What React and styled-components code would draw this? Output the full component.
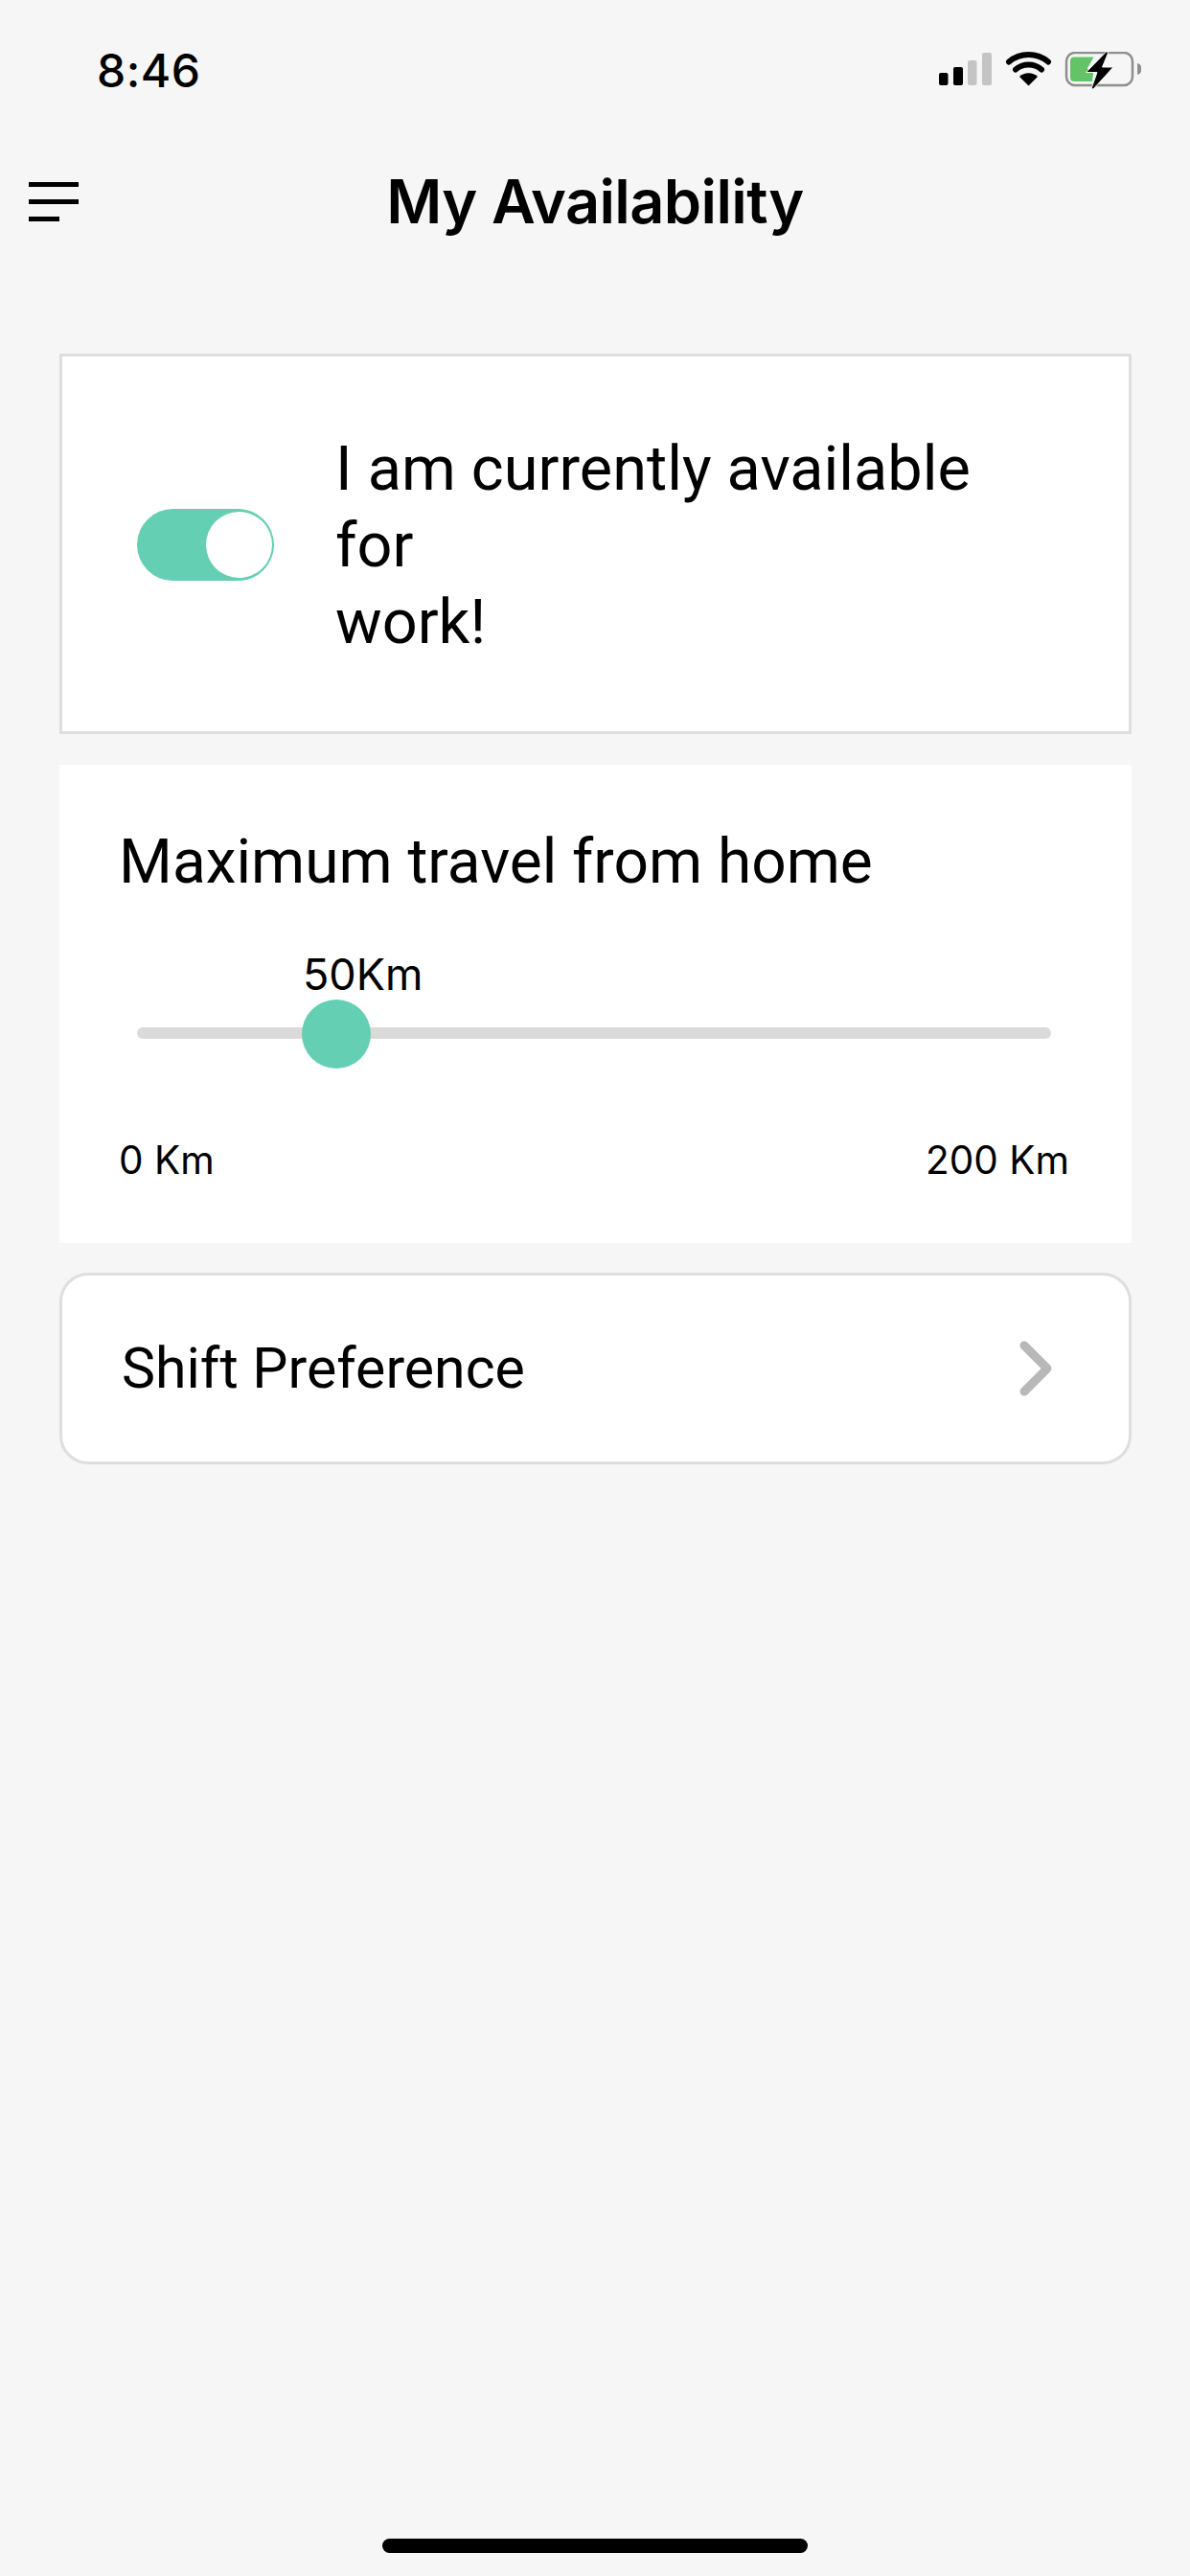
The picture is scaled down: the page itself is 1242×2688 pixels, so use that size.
import React from "react";
import styled, { createGlobalStyle } from "styled-components";

const Global = createGlobalStyle`
  html, body { margin: 0; padding: 0; background: #f6f6f6; }
  * { box-sizing: border-box; }
`;

const Page = styled.div`
  width: 1242px;
  height: 2688px;
  background: #f6f6f6;
  color: #000;
  font-family: "Roboto", "Liberation Sans", sans-serif;
  display: flex;
  flex-direction: column;
  overflow: hidden;
`;

const StatusBar = styled.div`
  height: 150px;
  padding: 48px 51px 0 101px;
  display: flex;
  justify-content: space-between;
  align-items: flex-start;
`;

const Time = styled.div`
  font-family: "Inter", sans-serif;
  font-size: 48px;
  font-weight: 500;
  line-height: 52px;
  letter-spacing: 0.5px;
`;

const StatusIcons = styled.svg`
  display: block;
  width: 211px;
  height: 40px;
  margin-top: 6px;
`;

const Header = styled.header`
  height: 120px;
  padding-left: 30px;
  display: flex;
  align-items: center;
  position: relative;
`;

const Title = styled.h1`
  flex: 1;
  margin: 0 82px 0 0;
  text-align: center;
  font-family: "Inter", sans-serif;
  font-size: 63px;
  font-weight: 600;
  line-height: 80px;
  letter-spacing: -0.6px;
`;

const Menu = styled.div`
  width: 52px;
  display: flex;
  flex-direction: column;
  gap: 13px;
`;

const MenuLine = styled.span`
  display: block;
  height: 5px;
  width: ${(p) => p.$w}px;
  background: #000;
`;

const Content = styled.main`
  margin-top: 99px;
  padding: 0 61px 0 62px;
  display: flex;
  flex-direction: column;
`;

const ToggleCard = styled.section`
  height: 397px;
  background: #fff;
  border: 3px solid #dedede;
  padding: 2px 60px 0 78px;
  display: flex;
  align-items: center;
  gap: 64px;
`;

const Toggle = styled.div`
  flex: none;
  width: 143px;
  height: 75px;
  border-radius: 38px;
  background: #65cfb3;
  padding: 3px 2px;
  display: flex;
  justify-content: flex-end;
`;

const Knob = styled.span`
  display: block;
  width: 69px;
  height: 69px;
  border-radius: 50%;
  background: #fff;
`;

const ToggleText = styled.p`
  margin: 0;
  width: 700px;
  font-size: 64.8px;
  line-height: 80px;
  font-weight: 400;
`;

const TravelCard = styled.section`
  height: 499px;
  margin-top: 32px;
  background: #fff;
  padding: 62px 65px 0 62px;
`;

const CardTitle = styled.h2`
  margin: 0;
  font-size: 64px;
  line-height: 80px;
  font-weight: 400;
`;

const SliderWrap = styled.div`
  position: relative;
  margin: 44px 19px 0 19px;
  height: 166px;
`;

const ValueLabel = styled.div`
  position: absolute;
  left: 173px;
  top: 6px;
  font-family: "Inter", sans-serif;
  font-size: 45px;
  line-height: 54px;
`;

const Track = styled.div`
  position: absolute;
  left: 0;
  right: 0;
  top: 88px;
  height: 12px;
  border-radius: 6px;
  background: #dadada;
`;

const Thumb = styled.div`
  position: absolute;
  left: 172px;
  top: 59px;
  width: 72px;
  height: 72px;
  border-radius: 50%;
  background: #65cfb3;
`;

const Range = styled.div`
  margin-top: 37px;
  display: flex;
  justify-content: space-between;
  font-family: "Inter", sans-serif;
  font-size: 40.5px;
  line-height: 48px;
`;

const ShiftRow = styled.section`
  height: 200px;
  margin-top: 31px;
  background: #fff;
  border: 3px solid #dedede;
  border-radius: 30px;
  padding: 0 78px 0 62px;
  display: flex;
  align-items: center;
  justify-content: space-between;
`;

const ShiftLabel = styled.span`
  font-size: 59px;
  line-height: 70px;
`;

const Chevron = styled.svg`
  display: block;
  width: 36px;
  height: 58px;
`;

const HomeBar = styled.div`
  width: 444px;
  height: 15px;
  border-radius: 8px;
  background: #000;
  margin: auto auto 24px;
`;

export default function App() {
  return (
    <Page>
      <Global />
      <StatusBar>
        <Time>8:46</Time>
        <StatusIcons viewBox="980 56 211 40">
          <rect x="980" y="78" width="9.5" height="13" rx="2" fill="#000" />
          <rect x="995" y="72" width="10" height="19" rx="2" fill="#000" />
          <rect x="1010" y="65" width="9.5" height="26" rx="2" fill="#c4c4c4" />
          <rect x="1025" y="57" width="10" height="34" rx="2" fill="#c4c4c4" />
          <path
            d="M1053 66.5a32 32 0 0 1 41 0M1060 74.5a21 21 0 0 1 27 0"
            fill="none"
            stroke="#000"
            strokeWidth="6"
            strokeLinecap="round"
          />
          <path d="M1064 82a14 14 0 0 1 19 0l-9.500 9.500z" fill="#000" />
          <rect x="1113" y="57" width="69" height="34" rx="9" fill="none" stroke="#8e8e8e" strokeWidth="2.500" />
          <path d="M1187 68q4.500 1 4.500 6t-4.500 6z" fill="#8e8e8e" />
          <path d="M1121 61.500h20.500l-7 12.500h7l-1.500 13h-19a4 4 0 0 1-4-4v-17.500a4 4 0 0 1 4-4z" fill="#62c466" />
          <path d="M1157 56h-2.500l-21 21.500h11.500l-6 17 2 .5 21-23h-11.500l6.500-16z" fill="#000" stroke="#f6f6f6" strokeWidth="1" />
        </StatusIcons>
      </StatusBar>
      <Header>
        <Menu>
          <MenuLine $w={52} />
          <MenuLine $w={52} />
          <MenuLine $w={32} />
        </Menu>
        <Title>My Availability</Title>
      </Header>
      <Content>
        <ToggleCard>
          <Toggle>
            <Knob />
          </Toggle>
          <ToggleText>
            I am currently available for
            <br />
            work!
          </ToggleText>
        </ToggleCard>
        <TravelCard>
          <CardTitle>Maximum travel from home</CardTitle>
          <SliderWrap>
            <ValueLabel>50Km</ValueLabel>
            <Track />
            <Thumb />
          </SliderWrap>
          <Range>
            <span>0 Km</span>
            <span>200 Km</span>
          </Range>
        </TravelCard>
        <ShiftRow>
          <ShiftLabel>Shift Preference</ShiftLabel>
          <Chevron viewBox="0 0 36 58">
            <path d="M5 5l24 24L5 53" fill="none" stroke="#b8b8b8" strokeWidth="9" strokeLinecap="round" strokeLinejoin="round" />
          </Chevron>
        </ShiftRow>
      </Content>
      <HomeBar />
    </Page>
  );
}
